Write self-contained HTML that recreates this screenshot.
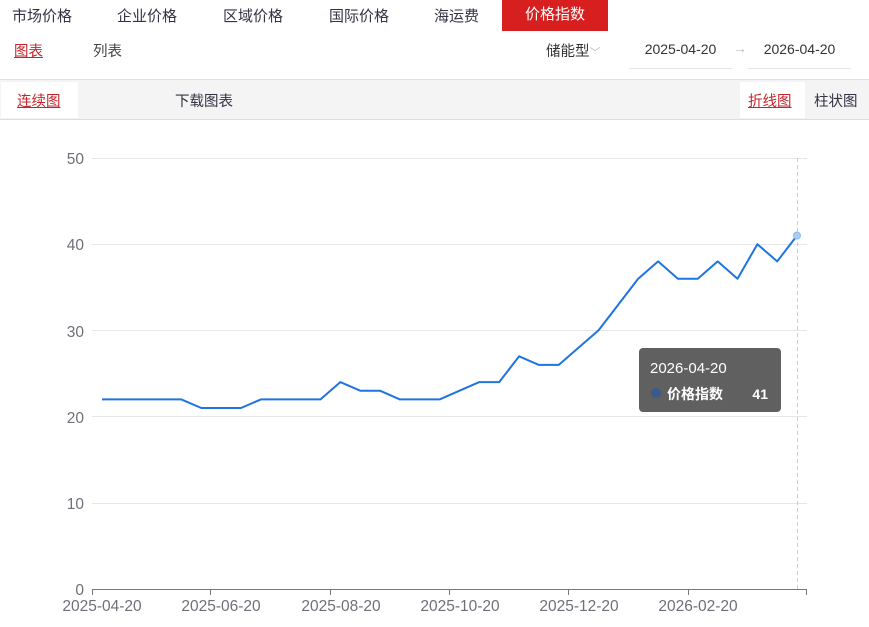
<!DOCTYPE html>
<html><head><meta charset="utf-8"><style>
*{margin:0;padding:0;box-sizing:border-box}
body{width:869px;height:627px;background:#fff;font-family:"Liberation Sans","Noto Sans CJK SC",sans-serif;color:#333;position:relative;overflow:hidden;font-size:14px}
.a{position:absolute;white-space:nowrap}
</style></head><body>
<div class="a" style="left:12px;top:5px;font-size:15px;color:#334">市场价格</div>
<div class="a" style="left:117px;top:5px;font-size:15px;color:#334">企业价格</div>
<div class="a" style="left:223px;top:5px;font-size:15px;color:#334">区域价格</div>
<div class="a" style="left:329px;top:5px;font-size:15px;color:#334">国际价格</div>
<div class="a" style="left:434px;top:5px;font-size:15px;color:#334">海运费</div>
<div class="a" style="left:502px;top:0;width:106px;height:31px;background:#d71f1f;color:#fff;font-size:15px;text-align:center;line-height:30px">价格指数</div>
<div class="a" style="left:14px;top:40px;color:#c8242b;text-decoration:underline;font-size:14.5px">图表</div>
<div class="a" style="left:93px;top:40px;color:#444;font-size:14.5px">列表</div>
<div class="a" style="left:546px;top:40px;color:#333;font-size:14.5px">储能型<span style="color:#bbb;font-size:11px">﹀</span></div>
<div class="a" style="left:629px;top:41px;width:103px;height:28px;border-bottom:1px solid #e5e5e5;text-align:center;color:#333;font-size:14px">2025-04-20</div>
<div class="a" style="left:733px;top:40px;color:#bbb">→</div>
<div class="a" style="left:748px;top:41px;width:103px;height:28px;border-bottom:1px solid #e5e5e5;text-align:center;color:#333;font-size:14px">2026-04-20</div>
<div class="a" style="left:0;top:79px;width:869px;height:41px;background:#f4f4f4;border-top:1px solid #e0e0e0;border-bottom:1px solid #ddd"></div>
<div class="a" style="left:1px;top:82px;width:77px;height:36px;background:#fff"></div>
<div class="a" style="left:17px;top:90px;color:#c8242b;text-decoration:underline;font-size:14.5px">连续图</div>
<div class="a" style="left:175px;top:90px;color:#334;font-size:14.5px">下载图表</div>
<div class="a" style="left:740px;top:82px;width:65px;height:36px;background:#fff"></div>
<div class="a" style="left:748px;top:90px;color:#c8242b;text-decoration:underline;font-size:14.5px">折线图</div>
<div class="a" style="left:814px;top:90px;color:#334;font-size:14.5px">柱状图</div>
<svg class="a" style="left:0;top:0" width="869" height="627" font-family="Liberation Sans, sans-serif" font-size="15.5" fill="#6e7079">
<g stroke="#e6e6e6" stroke-width="1">
<line x1="92" y1="158.5" x2="807" y2="158.5"/><line x1="92" y1="244.5" x2="807" y2="244.5"/><line x1="92" y1="330.5" x2="807" y2="330.5"/><line x1="92" y1="416.5" x2="807" y2="416.5"/><line x1="92" y1="503.5" x2="807" y2="503.5"/>
</g>
<g text-anchor="end"><text x="84" y="164">50</text><text x="84" y="250">40</text><text x="84" y="337">30</text><text x="84" y="423">20</text><text x="84" y="509">10</text><text x="84" y="595">0</text></g>
<line x1="92" y1="589.5" x2="807" y2="589.5" stroke="#777"/>
<g stroke="#777"><line x1="92.5" y1="589" x2="92.5" y2="595"/><line x1="210.5" y1="589" x2="210.5" y2="595"/><line x1="330.5" y1="589" x2="330.5" y2="595"/><line x1="449.5" y1="589" x2="449.5" y2="595"/><line x1="568.5" y1="589" x2="568.5" y2="595"/><line x1="688.5" y1="589" x2="688.5" y2="595"/><line x1="806.5" y1="589" x2="806.5" y2="595"/></g>
<g text-anchor="middle"><text x="102" y="611">2025-04-20</text><text x="221" y="611">2025-06-20</text><text x="341" y="611">2025-08-20</text><text x="460" y="611">2025-10-20</text><text x="579" y="611">2025-12-20</text><text x="698" y="611">2026-02-20</text></g>
<line x1="797.5" y1="158" x2="797.5" y2="589" stroke="#ccc" stroke-dasharray="4,3"/>
<polyline fill="none" stroke="#1f74e0" stroke-width="2" stroke-linejoin="round" points="102,399.4 121.9,399.4 141.7,399.4 161.6,399.4 181.4,399.4 201.3,408 221.2,408 241,408 260.9,399.4 280.7,399.4 300.6,399.4 320.5,399.4 340.3,382.1 360.2,390.7 380,390.7 399.9,399.4 419.8,399.4 439.6,399.4 459.5,390.7 479.3,382.1 499.2,382.1 519.1,356.3 538.9,364.9 558.8,364.9 578.6,347.6 598.5,330.4 618.4,304.5 638.2,278.7 658.1,261.4 677.9,278.7 697.8,278.7 717.7,261.4 737.5,278.7 757.4,244.2 777.2,261.4 797,235.6"/>
<circle cx="797" cy="235.6" r="3.5" fill="#a9cdf5" stroke="#8bb8ee" stroke-width="1"/>
<rect x="639" y="348" width="142" height="64" rx="4" fill="#5b5b5b" opacity="0.97"/>
<text x="650" y="373" fill="#fff" font-size="15">2026-04-20</text>
<circle cx="656" cy="393" r="5" fill="#3a5a8c"/>
<text x="667" y="399" fill="#fff" font-size="14" font-weight="bold" font-family="Liberation Sans, Noto Sans CJK SC, sans-serif">价格指数</text>
<text x="768" y="399" fill="#fff" font-size="14" font-weight="bold" text-anchor="end">41</text>
</svg>
</body></html>
